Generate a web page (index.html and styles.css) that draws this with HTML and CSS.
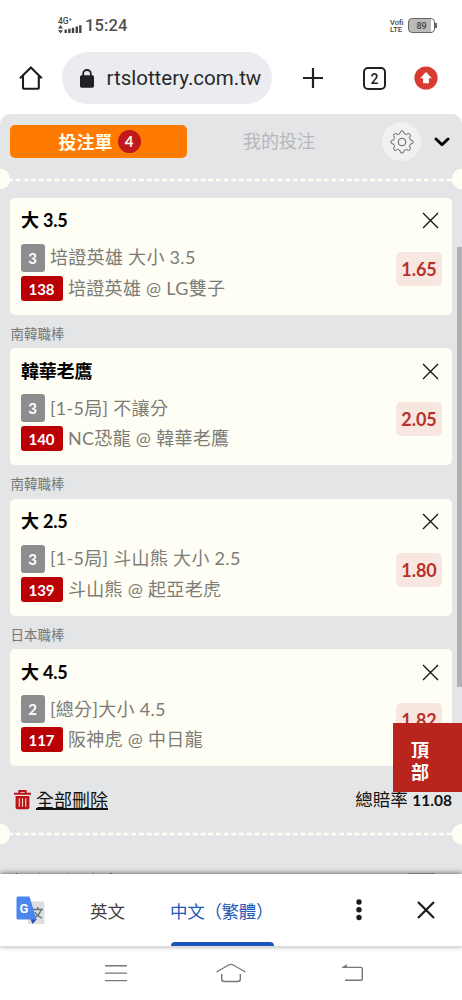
FILE: index.html
```
<!DOCTYPE html>
<html lang="zh-Hant">
<head>
<meta charset="utf-8">
<title>投注單</title>
<link rel="stylesheet" href="styles.css">
</head>
<body>
<div class="phone">
  <header class="status">
    <div class="signal">
      <span class="net">4G⁺</span>
      <svg width="24" height="9" viewBox="0 0 24 9"><path d="M0 3.4L2.5 0 5 3.4zM0 5.2L2.5 8.4 5 5.2z" fill="#444"/><path d="M7.7 8V4.6M11.4 8V3.8M15 8V2.8M18.8 8V1.6M22.3 8V.2" stroke="#444" stroke-width="2.4"/></svg>
    </div>
    <span class="time">15:24</span>
    <div class="volte"><span>Voﬁ</span><span>LTE</span></div>
    <div class="battery"><span>89</span></div>
  </header>

  <div class="toolbar">
    <svg class="home" width="24" height="24" viewBox="0 0 24 24" fill="none" stroke="#1c1c1f" stroke-width="2.1"><path d="M1 12.2L11.9 1.5 22.8 12.2M4 9.8V22Q4 22.7 4.8 22.7H19Q19.8 22.7 19.8 22V9.8"/></svg>
    <div class="url">
      <svg width="14" height="19" viewBox="0 0 14 19"><rect y="6.3" width="14" height="12.4" rx="1.6" fill="#202124"/><path d="M3.2 7V4.4a3.8 3.4 0 0 1 7.6 0V7" fill="none" stroke="#202124" stroke-width="1.8"/></svg>
      <span>rtslottery.com.tw</span>
    </div>
    <svg class="plus" width="20" height="20" viewBox="0 0 20 20" stroke="#202124" stroke-width="2.2"><path d="M10 0V20M0 10H20"/></svg>
    <div class="tabs">2</div>
    <svg class="update" width="24" height="24" viewBox="0 0 24 24"><circle cx="12" cy="12" r="11.6" fill="#d83b30"/><path d="M12 6L17.8 12.3H14.9V17.2H9.1V12.3H6.2z" fill="#fff"/></svg>
  </div>

  <main class="slip">
    <div class="slip-tabs">
      <div class="tab-on">投注單<span class="count">4</span></div>
      <div class="tab-off">我的投注</div>
      <div class="gear"><svg width="26" height="26" viewBox="-13 -13 26 26" fill="none" stroke="#606060" stroke-width="1"><path d="M-2.1-8.4Q-1.9-11.2 0-11.2T2.1-8.4Q3.2-8 4.4-7.4Q6.5-9.3 7.9-7.9T7.4-4.4Q8-3.2 8.4-2.1Q11.2-1.9 11.2 0T8.4 2.1Q8 3.2 7.4 4.4Q9.3 6.5 7.9 7.9T4.4 7.4Q3.2 8 2.1 8.4Q1.9 11.2 0 11.2T-2.1 8.4Q-3.2 8-4.4 7.4Q-6.5 9.3-7.9 7.9T-7.4 4.4Q-8 3.2-8.4 2.1Q-11.2 1.9-11.2 0T-8.4-2.1Q-8-3.2-7.4-4.4Q-9.3-6.5-7.9-7.9T-4.4-7.4Q-3.2-8-2.1-8.4z"/><circle r="3.8"/></svg></div>
      <svg class="chev" width="16" height="10" viewBox="0 0 16 10" fill="none" stroke="#000" stroke-width="2.9" stroke-linecap="round" stroke-linejoin="round"><path d="M2 2L8 7.7 14 2"/></svg>
    </div>
    <div class="cut"><svg width="462" height="22" viewBox="0 0 462 22"><path d="M8 11H456" stroke="#fffef4" stroke-width="2.5" stroke-dasharray="5 2.7"/><circle cx="0" cy="10" r="10.3" fill="#fffef4"/><circle cx="462" cy="10" r="10.3" fill="#fffef4"/></svg></div>

    <section class="bet">
      <div class="pick"><b>大 3.5</b><svg class="x" width="17" height="17" viewBox="0 0 17 17"><path d="M1 1L16 16M16 1L1 16"/></svg></div>
      <div class="detail"><div class="lines">
        <div class="line"><span class="kind">3</span><span class="txt">培證英雄 大小 3.5</span></div>
        <div class="line second"><span class="num">138</span><span class="txt">培證英雄 @ LG雙子</span></div>
      </div><span class="odds">1.65</span></div>
    </section>
    <div class="league">南韓職棒</div>
    <section class="bet">
      <div class="pick"><b>韓華老鷹</b><svg class="x" width="17" height="17" viewBox="0 0 17 17"><path d="M1 1L16 16M16 1L1 16"/></svg></div>
      <div class="detail"><div class="lines">
        <div class="line"><span class="kind">3</span><span class="txt">[1-5局] 不讓分</span></div>
        <div class="line second"><span class="num">140</span><span class="txt">NC恐龍 @ 韓華老鷹</span></div>
      </div><span class="odds">2.05</span></div>
    </section>
    <div class="league">南韓職棒</div>
    <section class="bet">
      <div class="pick"><b>大 2.5</b><svg class="x" width="17" height="17" viewBox="0 0 17 17"><path d="M1 1L16 16M16 1L1 16"/></svg></div>
      <div class="detail"><div class="lines">
        <div class="line"><span class="kind">3</span><span class="txt">[1-5局] 斗山熊 大小 2.5</span></div>
        <div class="line second"><span class="num">139</span><span class="txt">斗山熊 @ 起亞老虎</span></div>
      </div><span class="odds">1.80</span></div>
    </section>
    <div class="league">日本職棒</div>
    <section class="bet">
      <div class="pick"><b>大 4.5</b><svg class="x" width="17" height="17" viewBox="0 0 17 17"><path d="M1 1L16 16M16 1L1 16"/></svg></div>
      <div class="detail"><div class="lines">
        <div class="line"><span class="kind">2</span><span class="txt">[總分]大小 4.5</span></div>
        <div class="line second"><span class="num">117</span><span class="txt">阪神虎 @ 中日龍</span></div>
      </div><span class="odds">1.82</span></div>
    </section>

    <div class="totals">
      <svg width="17" height="20" viewBox="0 0 17 20"><path d="M0 3.8H17M5.3 3.5V1H11.7V3.5" fill="none" stroke="#ba1318" stroke-width="1.9"/><path d="M1.6 6H15.4V17.5Q15.4 19.3 13.6 19.3H3.4Q1.6 19.3 1.6 17.5z" fill="#ba1318"/><path d="M5.3 8.2V16.8M8.5 8.2V16.8M11.7 8.2V16.8" stroke="#f0cfcd" stroke-width="1.2"/></svg>
      <u>全部刪除</u>
      <span class="sum">總賠率 <b>11.08</b></span>
    </div>
    <div class="cut"><svg width="462" height="22" viewBox="0 0 462 22"><path d="M8 11H456" stroke="#fffef4" stroke-width="2.5" stroke-dasharray="5 2.7"/><circle cx="0" cy="11" r="10.3" fill="#fffef4"/><circle cx="462" cy="11" r="10.3" fill="#fffef4"/></svg></div>
    <div class="combo"><span>組合一過含中</span><i></i></div>
    <div class="scrollbar"></div>
    <a class="top">頂<br>部</a>
  </main>

  <div class="translate">
    <svg class="gt" width="29" height="29" viewBox="0 0 29 29"><rect x="12" y="5.5" width="16.5" height="22.5" rx="1.5" fill="#dcdee1"/><path d="M16.5 13.5H27M21.7 11V13.5M25 13.5Q23.5 19.5 17.5 22M19 16Q21.5 20.5 26 22" fill="none" stroke="#687178" stroke-width="1.4"/><path d="M14.5 23H21L16.5 28z" fill="#2851b8"/><path d="M2 .5H13.5L20.5 23.5H2Q.5 23.5 .5 22V2Q.5 .5 2 .5z" fill="#4a86ee"/><text x="3.5" y="16.6">G</text></svg>
    <span class="lang">英文</span>
    <span class="lang on">中文（繁體）</span>
    <svg class="more" width="6" height="22" viewBox="0 0 6 22" fill="#1b1b1d"><circle cx="3" cy="3" r="2.7"/><circle cx="3" cy="10.8" r="2.7"/><circle cx="3" cy="18.5" r="2.7"/></svg>
    <svg class="close" width="18" height="18" viewBox="0 0 18 18" stroke="#1b1b1d" stroke-width="2.2"><path d="M1 1L17 17M17 1L1 17"/></svg>
  </div>

  <nav class="nav">
    <svg class="n1" width="22" height="18" viewBox="0 0 22 18"><path d="M0 1.8H22M0 9.1H22M0 16.6H22"/></svg>
    <svg class="n2" width="30" height="20" viewBox="0 0 30 20"><path d="M.5 9L12.8 2Q15 .8 17.2 2L29.5 9M5.7 11V16Q5.7 18.5 8.2 18.5H21.8Q24.3 18.5 24.3 16V11"/></svg>
    <svg class="n3" width="23" height="18" viewBox="0 0 23 18"><path d="M2 3.4H19.8Q21.3 3.4 21.3 4.9V14.8Q21.3 16.3 19.8 16.3H4"/><path class="tip" d="M0 3.8L6 .3V3.8z"/></svg>
  </nav>
</div>
</body>
</html>
```

FILE: styles.css
```
* { box-sizing: border-box; }
body { margin: 0; background: #fff; font-family: Lato, "Noto Sans CJK TC", sans-serif; }
svg { display: block; flex: none; }
.phone { width: 462px; height: 1000px; display: flex; flex-direction: column; overflow: hidden; }

.status { height: 43px; flex: none; display: flex; align-items: flex-start; padding: 16px 0 0 58px; font-family: Roboto, sans-serif; color: #444; }
.signal { width: 24px; }
.net { display: block; height: 9px; font-size: 8.5px; line-height: 10px; font-weight: 500; }
.time { margin: 1px 0 0 3px; font-size: 16.5px; line-height: 18px; font-weight: 500; letter-spacing: .15px; color: #505050; }
.volte { margin: 3px 0 0 auto; width: 14px; font-size: 7.5px; line-height: 7px; font-weight: 500; }
.volte span { display: block; white-space: nowrap; }
.battery { position: relative; margin: 2px 27px 0 4px; width: 27px; height: 15px; border: 1px solid #666; border-radius: 4px; background: linear-gradient(90deg, #bbb 22px, #fff 22px); font-size: 9px; line-height: 14px; font-weight: 500; text-align: center; }
.battery::after { content: ""; position: absolute; right: -2.5px; top: 4px; width: 1.5px; height: 5px; background: #666; }

.toolbar { height: 71px; flex: none; display: flex; align-items: center; padding: 0 0 1px 19px; }
.url { width: 210px; height: 52px; margin-left: 19px; padding-left: 18px; border-radius: 26px; background: #ebecf0; display: flex; align-items: center; gap: 12.5px; font: 20.5px Roboto, sans-serif; color: #28292c; white-space: nowrap; }
.plus { margin-left: 31px; }
.tabs { width: 23px; height: 23px; margin-left: 40px; border: 2px solid #202124; border-radius: 5px; font: 500 14px/20px Roboto, sans-serif; text-align: center; color: #202124; }
.update { margin-left: 28px; }

.slip { position: relative; height: 760px; flex: none; overflow: hidden; background: #e4e5e7; border-radius: 10px 10px 0 0; }
.slip-tabs { display: flex; align-items: center; height: 55px; padding: 0 0 0 10px; }
.tab-on { width: 177px; height: 33px; border-radius: 5px; background: #ff7a00; color: #fffbe9; display: flex; align-items: center; justify-content: center; gap: 5px; padding: 0 0 2px 2px; font-size: 18px; font-weight: 700; }
.count { width: 23px; height: 23px; margin-top: 2px; border-radius: 50%; background: #c1191b; font-size: 15px; line-height: 23px; font-weight: 700; text-align: center; }
.tab-off { width: 185px; padding: 0 1px 3px 0; text-align: center; font-size: 18px; color: #b6b7b9; }
.gear { width: 39px; height: 39px; margin-left: 10px; border-radius: 50%; background: #f1f1f2; display: flex; align-items: center; justify-content: center; }
.chev { margin-left: 13px; }
.cut { height: 22px; }

.bet { height: 117px; margin: 7px 10px 0; padding: 10px 10px 0 10.5px; background: #fffef4; border-radius: 5px; }
.cut + .bet { margin-top: 6.7px; }
.pick { height: 26px; display: flex; align-items: center; justify-content: space-between; font-size: 18px; letter-spacing: -.2px; color: #000; }
.pick b { font-weight: 700; padding-bottom: 3px; padding-left: .5px; }
.x { margin-right: 3px; fill: none; stroke: #111; stroke-width: 1.3; }
.detail { display: flex; align-items: flex-start; justify-content: space-between; padding-top: 10px; }
.line { height: 28px; display: flex; align-items: center; font-size: 18px; color: #7c7b77; white-space: pre; }
.txt { letter-spacing: .3px; font-weight: 400; padding-bottom: 3px; }
.second { height: 25px; margin-top: 4px; }
.kind, .num { font-size: 15px; font-weight: 700; color: #fff; text-align: center; border-radius: 3px; margin-right: 5.5px; }
.kind { width: 24px; height: 28px; line-height: 29px; background: #8d8d8f; }
.num { width: 42px; height: 25px; line-height: 26px; background: #ba0005; }
.odds { width: 46px; height: 34px; margin-top: 8px; border-radius: 5px; background: #f8e7e0; color: #b7312a; font-size: 18px; font-weight: 700; line-height: 34px; text-align: center; }
.league { height: 26.6px; padding: 6px 0 0 10.5px; font-size: 13.5px; line-height: 26px; color: #777; }

.totals { height: 57px; padding: 15px 10px 0 14px; display: flex; align-items: flex-start; font-size: 18px; line-height: 38px; color: #111; }
.totals svg { margin-top: 9px; }
.totals u { margin-left: 5px; text-underline-offset: 1px; text-decoration-thickness: 1.5px; text-decoration-skip-ink: none; }
.sum { margin-left: auto; font-size: 17.5px; }
.sum b { font-size: 15.5px; }
.combo { display: flex; justify-content: space-between; padding: 22px 27px 0 12px; font-size: 18px; line-height: 30px; color: #333; }
.combo i { width: 27px; height: 20px; margin-top: 6px; background: #aaa; }
.scrollbar { position: absolute; right: 0; top: 133px; width: 5px; height: 440px; background: #b1b1b3; }
.top { position: absolute; right: 0; top: 609px; width: 69px; height: 69px; padding: 16px 15px 0 0; background: #b9251c; color: #fff; font-size: 18px; line-height: 22px; font-weight: 700; text-align: center; }

.translate { position: relative; height: 73px; flex: none; background: #fff; border-bottom: 1px solid #dedede; box-shadow: 0 -1px 5px rgba(0, 0, 0, .5); display: flex; align-items: center; padding-left: 16px; }
.gt text { font: 700 13px Roboto, sans-serif; fill: #fff; }
.lang { margin-left: 45px; font: 17.5px "Noto Sans CJK TC", sans-serif; color: #3f3f42; white-space: nowrap; }
.lang.on { position: relative; width: 105px; margin-left: 45px; color: #2259b8; letter-spacing: -.3px; }
.lang.on::after { content: ""; position: absolute; left: 1px; top: 44px; width: 103px; height: 4px; border-radius: 4px 4px 0 0; background: #1856bd; }
.more { margin-left: 81px; }
.close { margin-left: 55px; }

.nav { height: 53px; flex: none; display: flex; align-items: center; padding: 0 0 2px 105px; background: #fff; }
.nav path { fill: none; stroke: #777; stroke-width: 1.4; }
.nav .tip { fill: #777; stroke: none; }
.n2 { margin-left: 89px; }
.n3 { margin-left: 95px; }
```
